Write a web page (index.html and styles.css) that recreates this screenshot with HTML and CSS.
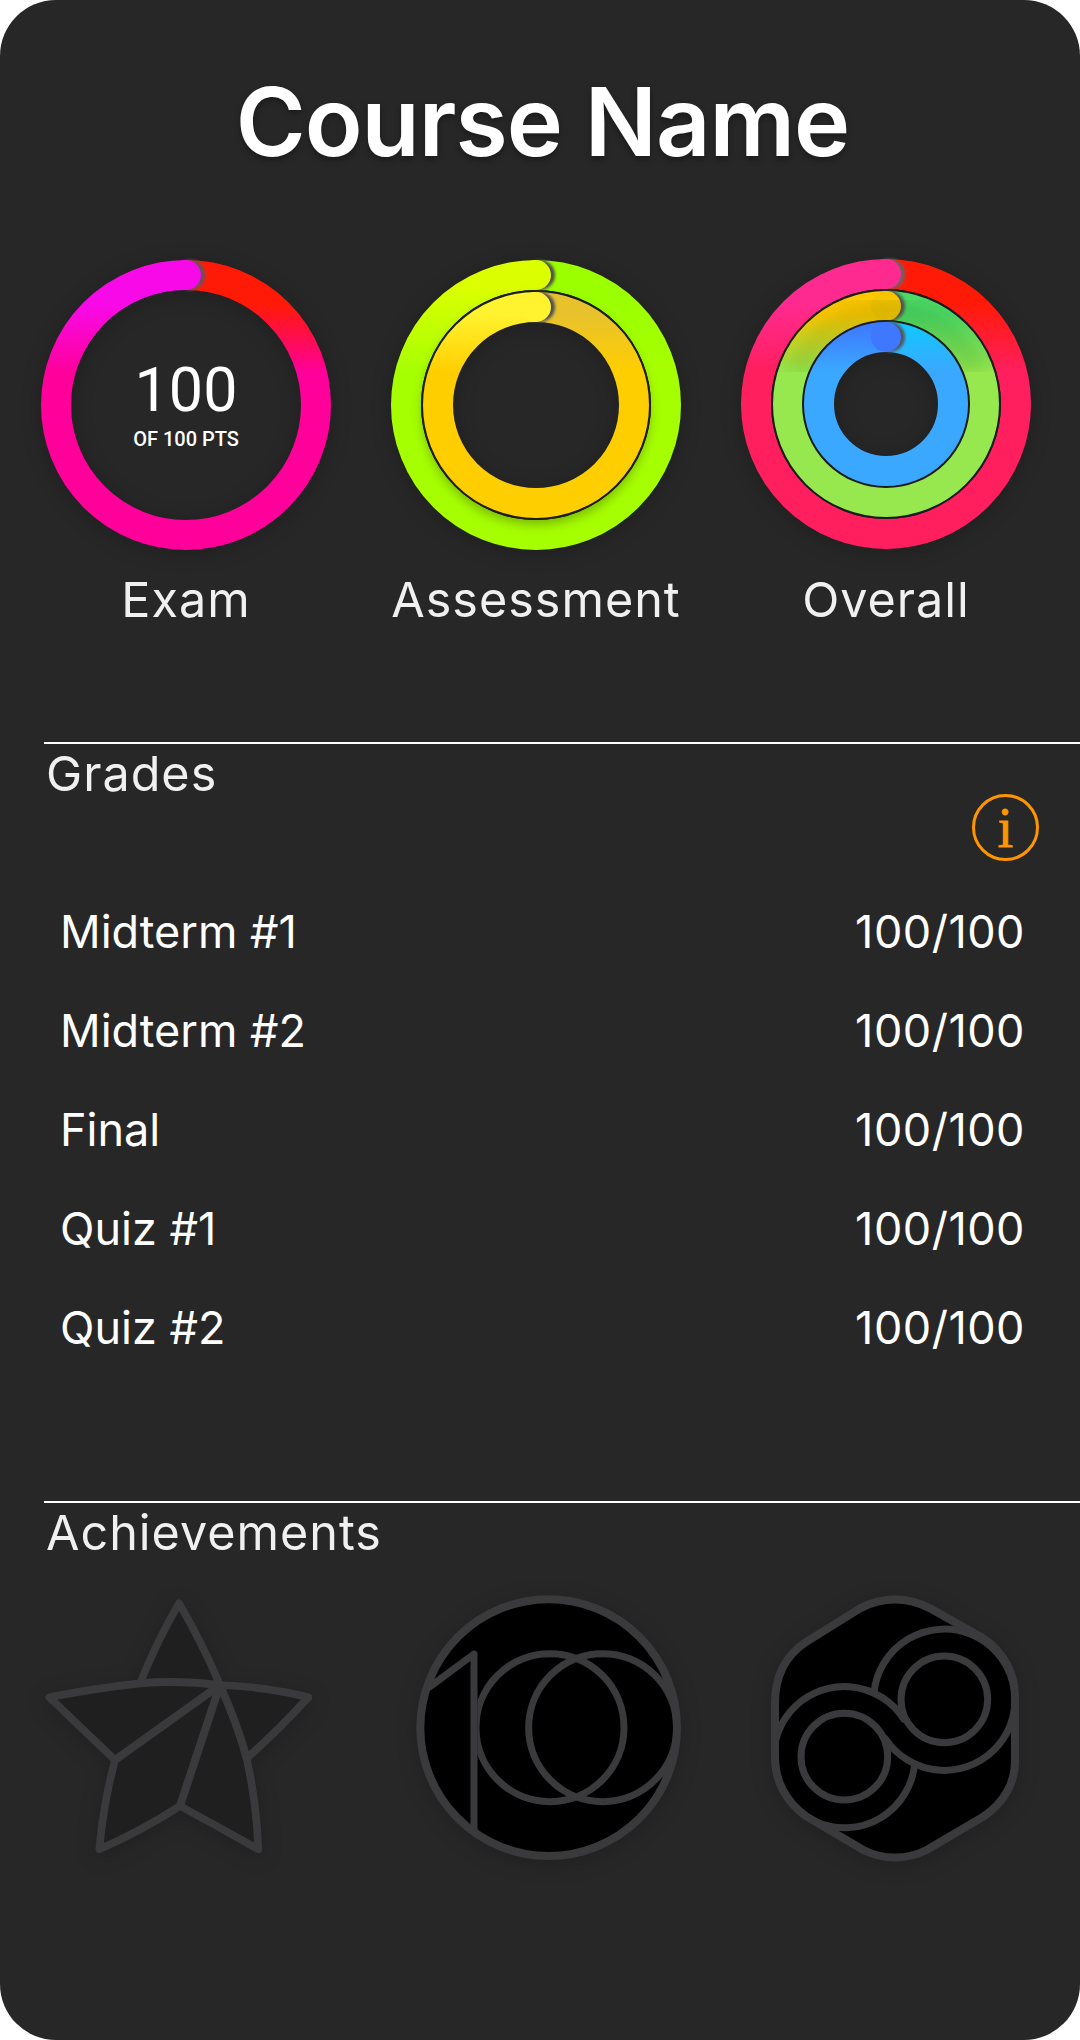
FILE: index.html
```html
<!DOCTYPE html>
<html lang="en">
<head>
<meta charset="utf-8">
<title>Course Name</title>
<link rel="stylesheet" href="styles.css">
</head>
<body>
<main class="card">
  <h1 class="title">Course Name</h1>

  <section class="rings">
    <figure class="ring">
      <div class="ring-art">
        <svg class="ring-svg" viewBox="0 0 300 300" width="300" height="300">
          <defs>
            <linearGradient id="a1" gradientUnits="userSpaceOnUse" x1="0" y1="50" x2="0" y2="117"><stop offset="0" stop-color="#ff1a08"/><stop offset="1" stop-color="#ff009a"/></linearGradient>
            <linearGradient id="a2" gradientUnits="userSpaceOnUse" x1="0" y1="50" x2="0" y2="117"><stop offset="0" stop-color="#f80ae8"/><stop offset="1" stop-color="#ff009a"/></linearGradient>
            <filter id="capA" x="-50%" y="-50%" width="200%" height="200%"><feGaussianBlur stdDeviation="1.4"/></filter>
          </defs>
          <path class="arc" d="M150 20A130 130 0 0 1 150 280" stroke="url(#a1)"/>
          <circle cx="154" cy="20" r="15" fill="#5a5a5a" filter="url(#capA)"/>
          <path class="arc" d="M150 280A130 130 0 0 1 150 20" stroke="url(#a2)"/>
          <circle cx="150" cy="20" r="15" fill="#f80ae8"/>
        </svg>
        <div class="score">
          <span class="score-num">100</span>
          <span class="score-sub">OF 100 PTS</span>
        </div>
      </div>
      <figcaption class="ring-label">Exam</figcaption>
    </figure>

    <figure class="ring">
      <div class="ring-art">
        <svg class="ring-svg" viewBox="0 0 300 300" width="300" height="300">
          <defs>
            <linearGradient id="b1" gradientUnits="userSpaceOnUse" x1="0" y1="50" x2="0" y2="117"><stop offset="0" stop-color="#9cff00"/><stop offset="1" stop-color="#a6ff00"/></linearGradient>
            <linearGradient id="b2" gradientUnits="userSpaceOnUse" x1="0" y1="30" x2="0" y2="117"><stop offset="0" stop-color="#dcff00"/><stop offset="1" stop-color="#a6ff00"/></linearGradient>
            <linearGradient id="b3" gradientUnits="userSpaceOnUse" x1="0" y1="60" x2="0" y2="117"><stop offset="0" stop-color="#e8c22c"/><stop offset="1" stop-color="#ffce00"/></linearGradient>
            <linearGradient id="b4" gradientUnits="userSpaceOnUse" x1="0" y1="60" x2="0" y2="117"><stop offset="0" stop-color="#fff22e"/><stop offset="1" stop-color="#ffce00"/></linearGradient>
            <filter id="capB" x="-50%" y="-50%" width="200%" height="200%"><feGaussianBlur stdDeviation="1.4"/></filter>
            <filter id="shB" x="-20%" y="-20%" width="140%" height="140%"><feGaussianBlur stdDeviation="6"/></filter>
          </defs>
          <path class="arc" d="M150 20A130 130 0 0 1 150 280" stroke="url(#b1)"/>
          <circle cx="154" cy="20" r="15" fill="#4c4c4c" filter="url(#capB)"/>
          <path class="arc" d="M150 280A130 130 0 0 1 150 20" stroke="url(#b2)"/>
          <circle cx="150" cy="20" r="15" fill="#dcff00"/>
          <circle cx="150" cy="156" r="106" fill="none" stroke="#000" stroke-opacity=".3" stroke-width="14" filter="url(#shB)"/>
          <circle class="edge" cx="150" cy="150" r="114"/>
          <path class="arc" d="M150 52A98 98 0 0 1 150 248" stroke="url(#b3)"/>
          <circle cx="154" cy="52" r="15" fill="#4c4c58" filter="url(#capB)"/>
          <path class="arc" d="M150 248A98 98 0 0 1 150 52" stroke="url(#b4)"/>
          <circle cx="150" cy="52" r="15" fill="#fff22e"/>
        </svg>
      </div>
      <figcaption class="ring-label">Assessment</figcaption>
    </figure>

    <figure class="ring">
      <div class="ring-art ring-art-raised">
        <svg class="ring-svg" viewBox="0 0 300 300" width="300" height="300">
          <defs>
            <linearGradient id="c1" gradientUnits="userSpaceOnUse" x1="0" y1="50" x2="0" y2="117"><stop offset="0" stop-color="#ff1a08"/><stop offset="1" stop-color="#ff1f5e"/></linearGradient>
            <linearGradient id="c2" gradientUnits="userSpaceOnUse" x1="0" y1="50" x2="0" y2="117"><stop offset="0" stop-color="#ff2a90"/><stop offset="1" stop-color="#ff1f5e"/></linearGradient>
            <linearGradient id="c3" gradientUnits="userSpaceOnUse" x1="0" y1="60" x2="0" y2="117"><stop offset="0" stop-color="#4cd964"/><stop offset="1" stop-color="#96e84e"/></linearGradient>
            <linearGradient id="c4" gradientUnits="userSpaceOnUse" x1="0" y1="60" x2="0" y2="117"><stop offset="0" stop-color="#ffc800"/><stop offset="1" stop-color="#96e84e"/></linearGradient>
            <linearGradient id="c5" gradientUnits="userSpaceOnUse" x1="0" y1="70" x2="0" y2="117"><stop offset="0" stop-color="#10c8ff"/><stop offset="1" stop-color="#3ba8ff"/></linearGradient>
            <linearGradient id="c6" gradientUnits="userSpaceOnUse" x1="0" y1="70" x2="0" y2="117"><stop offset="0" stop-color="#3d78ff"/><stop offset="1" stop-color="#3ba8ff"/></linearGradient>
            <filter id="capC" x="-50%" y="-50%" width="200%" height="200%"><feGaussianBlur stdDeviation="1.4"/></filter>
            <filter id="shC" x="-20%" y="-20%" width="140%" height="140%"><feGaussianBlur stdDeviation="7"/></filter>
            <clipPath id="midC"><path d="M0 0H300V118H0Z"/></clipPath>
          </defs>
          <path class="arc" d="M150 20A130 130 0 0 1 150 280" stroke="url(#c1)"/>
          <circle cx="154" cy="20" r="15" fill="#666" filter="url(#capC)"/>
          <path class="arc" d="M150 280A130 130 0 0 1 150 20" stroke="url(#c2)"/>
          <circle cx="150" cy="20" r="15" fill="#ff2a90"/>
          <circle class="edge" cx="150" cy="150" r="114"/>
          <path class="arc" d="M150 52A98 98 0 0 1 150 248" stroke="url(#c3)"/>
          <circle cx="154" cy="52" r="15" fill="#555" filter="url(#capC)"/>
          <path class="arc" d="M150 248A98 98 0 0 1 150 52" stroke="url(#c4)"/>
          <circle cx="150" cy="52" r="15" fill="#f6c400"/>
          <g clip-path="url(#midC)">
            <path d="M60 118A98 98 0 0 1 240 118" fill="none" stroke="#1a3a10" stroke-opacity=".1" stroke-width="30" filter="url(#shC)"/>
          </g>
          <circle class="edge" cx="150" cy="150" r="83"/>
          <path class="arc" d="M150 83A67 67 0 0 1 150 217" stroke="url(#c5)"/>
          <circle cx="154" cy="83" r="15" fill="#555" filter="url(#capC)"/>
          <path class="arc" d="M150 217A67 67 0 0 1 150 83" stroke="url(#c6)"/>
          <circle cx="150" cy="83" r="15" fill="#3d78ff"/>
        </svg>
      </div>
      <figcaption class="ring-label">Overall</figcaption>
    </figure>
  </section>

  <section class="section grades">
    <h2 class="section-title">Grades</h2>
    <div class="info-row"><span class="info">i</span></div>
    <ul class="grade-list">
      <li class="grade"><span>Midterm #1</span><span class="grade-val">100/100</span></li>
      <li class="grade"><span>Midterm #2</span><span class="grade-val">100/100</span></li>
      <li class="grade"><span>Final</span><span class="grade-val">100/100</span></li>
      <li class="grade"><span>Quiz #1</span><span class="grade-val">100/100</span></li>
      <li class="grade"><span>Quiz #2</span><span class="grade-val">100/100</span></li>
    </ul>
  </section>

  <section class="section achievements">
    <h2 class="section-title">Achievements</h2>
    <div class="badges">
      <svg class="badge" viewBox="0 0 900 900" width="300" height="300">
        <path class="star-fill" d="M447 100Q515 215 570 345Q710 350 835 382Q745 480 650 565Q680 700 685 838Q565 770 450 708Q330 785 208 838Q220 700 255 570L58 382Q190 355 330 340Q380 215 447 100Z"/>
        <path class="line" d="M330 340Q450 330 570 345M570 345L255 570M570 345L450 708M570 345Q625 470 650 565"/>
      </svg>
      <svg class="badge" viewBox="0 0 900 900" width="300" height="300">
        <defs><clipPath id="medal"><circle cx="446" cy="473" r="385"/></clipPath><clipPath id="zero"><rect x="232" y="0" width="668" height="900"/></clipPath></defs>
        <circle cx="446" cy="473" r="385" fill="#000"/>
        <g clip-path="url(#medal)">
          <g clip-path="url(#zero)"><circle class="line-thin" cx="450" cy="473" r="222"/></g>
          <circle class="line-thin" cx="608" cy="473" r="222"/>
          <path class="line-thin" d="M222 785V252L90 350"/>
        </g>
        <circle class="line" cx="446" cy="473" r="385"/>
      </svg>
      <svg class="badge" viewBox="0 0 900 900" width="300" height="300">
        <defs><clipPath id="hex"><path d="M75 400C75 310 115 250 170 215L330 115C400 80 470 80 540 115L700 205C760 245 795 310 795 380V575C795 640 760 700 700 740L530 840C470 870 400 870 340 840L170 740C115 700 75 640 75 560Z"/></clipPath></defs>
        <path d="M75 400C75 310 115 250 170 215L330 115C400 80 470 80 540 115L700 205C760 245 795 310 795 380V575C795 640 760 700 700 740L530 840C470 870 400 870 340 840L170 740C115 700 75 640 75 560Z" fill="#000"/>
        <g clip-path="url(#hex)">
          <path class="line-thin" d="M462 448A212 212 0 1 0 494 582"/>
          <path class="line-thin" d="M372 368A212 212 0 1 1 406 506"/>
          <circle class="line-thin" cx="583" cy="388" r="130"/>
          <circle class="line-thin" cx="283" cy="560" r="130"/>
        </g>
        <path class="line" d="M75 400C75 310 115 250 170 215L330 115C400 80 470 80 540 115L700 205C760 245 795 310 795 380V575C795 640 760 700 700 740L530 840C470 870 400 870 340 840L170 740C115 700 75 640 75 560Z"/>
      </svg>
    </div>
  </section>
</main>
</body>
</html>
```
FILE: styles.css
```css
* { box-sizing: border-box; }
html, body { margin: 0; padding: 0; background: #fff; }
body { width: 1080px; height: 2040px; overflow: hidden; font-family: Inter, "Liberation Sans", sans-serif; color: #fff; }

.card {
  width: 1080px;
  height: 2040px;
  background: #272727;
  border-radius: 56px;
  overflow: hidden;
  padding-top: 67px;
}

.title {
  margin: 0;
  height: 188px;
  padding-left: 5px;
  text-align: center;
  font-size: 95px;
  line-height: 110px;
  font-weight: 600;
  letter-spacing: -1px;
  text-shadow: 0 3px 6px rgba(0, 0, 0, .35);
}

.rings { display: flex; gap: 50px; padding-left: 36px; height: 487px; }
.ring { margin: 0; width: 300px; display: flex; flex-direction: column; align-items: center; }
.ring-art { position: relative; width: 300px; height: 300px; }
.ring-art-raised { margin-top: -1px; margin-bottom: 1px; }
.ring-svg { display: block; filter: drop-shadow(0 3px 10px rgba(0, 0, 0, .22)); }
.arc { fill: none; stroke-width: 30; }
.edge { fill: none; stroke: #1c1c1c; stroke-width: 2; }

.score { position: absolute; inset: 0; display: flex; flex-direction: column; align-items: center; font-family: Roboto, sans-serif; padding-top: 100px; }
.score-num { font-size: 61px; line-height: 70px; font-weight: 400; }
.score-sub { font-size: 20px; line-height: 24px; font-weight: 500; margin-top: 2px; }

.ring-label { font-size: 48.5px; line-height: 56px; margin-top: 17px; color: #f0f0f0; letter-spacing: 1px; white-space: nowrap; }

.section { margin-left: 44px; border-top: 2px solid #fff; }
.section-title { margin: 0; padding-left: 2px; font-size: 48.5px; line-height: 60px; font-weight: 400; color: #f0f0f0; letter-spacing: 1px; }

.grades { height: 759px; }
.info-row { display: flex; justify-content: flex-end; padding-right: 41px; margin-top: -10px; }
.info { width: 67px; height: 67px; border: 3px solid #ff9500; border-radius: 50%; display: flex; align-items: center; justify-content: center; color: #ff9500; font-family: "Liberation Serif", serif; font-weight: 400; font-size: 56px; line-height: 1; -webkit-text-stroke: .9px #ff9500; }

.grade-list { list-style: none; margin: 21px 0 0; padding: 0 55px 0 16px; }
.grade { display: flex; justify-content: space-between; height: 99px; align-items: center; font-size: 45px; }
.grade-val { letter-spacing: .5px; }

.badges { display: grid; grid-template-columns: 370px 350px 300px; margin-left: -14px; margin-top: 7px; }
.badge { display: block; filter: drop-shadow(0 4px 10px rgba(0, 0, 0, .18)); }
.star-fill { fill: #1f1f1f; stroke: #3a3a3c; stroke-width: 23; stroke-linejoin: round; }
.line { fill: none; stroke: #3a3a3c; stroke-width: 24; stroke-linejoin: round; stroke-linecap: round; }
.line-thin { fill: none; stroke: #3a3a3c; stroke-width: 21; stroke-linejoin: round; stroke-linecap: round; }
```
